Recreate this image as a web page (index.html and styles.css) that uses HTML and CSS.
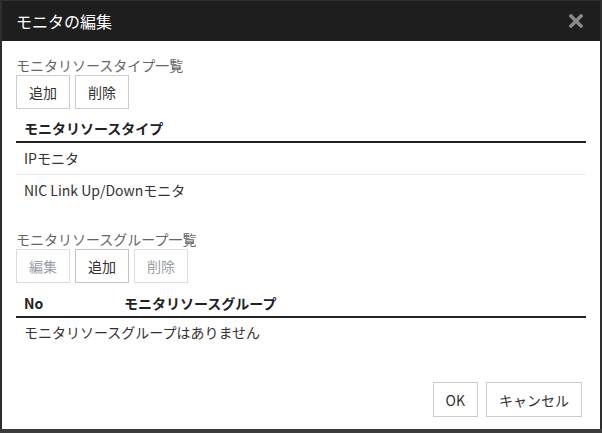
FILE: index.html
```html
<!DOCTYPE html>
<html lang="ja">
<head>
<meta charset="utf-8">
<title>モニタの編集</title>
<link rel="stylesheet" href="styles.css">
</head>
<body>
<div class="dialog">
  <div class="dialog-header">
    <span class="dialog-title">モニタの編集</span>
    <svg class="close" width="14" height="14" viewBox="0 0 14 14"><path d="M2 2L12 12M12 2L2 12" stroke="#8a8a8a" stroke-width="3.4" stroke-linecap="square"/></svg>
  </div>
  <div class="dialog-body">
    <div class="section-label">モニタリソースタイプ一覧</div>
    <div class="btn-row">
      <button class="btn">追加</button>
      <button class="btn">削除</button>
    </div>
    <table class="grid">
      <thead><tr><th>モニタリソースタイプ</th></tr></thead>
      <tbody>
        <tr><td>IPモニタ</td></tr>
        <tr class="last"><td>NIC Link Up/Downモニタ</td></tr>
      </tbody>
    </table>

    <div class="section-label section-gap">モニタリソースグループ一覧</div>
    <div class="btn-row">
      <button class="btn disabled">編集</button>
      <button class="btn active">追加</button>
      <button class="btn disabled">削除</button>
    </div>
    <table class="grid grid-group">
      <thead><tr><th class="col-no">No</th><th>モニタリソースグループ</th></tr></thead>
      <tbody>
        <tr class="empty"><td colspan="2">モニタリソースグループはありません</td></tr>
      </tbody>
    </table>
  </div>
  <div class="dialog-footer">
    <button class="btn btn-foot">OK</button>
    <button class="btn btn-foot">キャンセル</button>
  </div>
</div>
<div class="backdrop-strip"></div>
</body>
</html>
```
FILE: styles.css
```css
* { box-sizing: border-box; }
html, body {
  margin: 0;
  padding: 0;
  width: 602px;
  height: 433px;
  overflow: hidden;
  background: #2e2e2e;
  font-family: "Noto Sans CJK JP", "Noto Sans", sans-serif;
  font-size: 14px;
  color: #333;
}
.dialog {
  margin: 1px 2px 0 2px;
  width: 598px;
  height: 428px;
  background: #fff;
  display: flex;
  flex-direction: column;
}
.dialog-header {
  height: 40px;
  background: #1e1e1e;
  display: flex;
  align-items: center;
  justify-content: space-between;
  padding: 0 17px 0 14px;
}
.dialog-title {
  color: #fff;
  font-size: 16px;
  line-height: 20px;
}
.close { display: block; }
.dialog-body {
  padding: 14px 14px 0 14px;
}
.section-label {
  color: #666;
  line-height: 20px;
}
.section-gap { margin-top: 23px; }
.btn-row {
  display: flex;
  gap: 5px;
}
.btn {
  font-family: inherit;
  font-size: 14px;
  line-height: 20px;
  height: 34px;
  padding: 0 12px;
  background: #fff;
  border: 1px solid #ccc;
  color: #333;
  border-radius: 0;
}
.btn.disabled {
  color: #9aa0a6;
  border-color: #ddd;
}
.btn.active { border-color: #c4c4c4; }
.grid {
  width: 100%;
  border-collapse: collapse;
}
.grid th {
  text-align: left;
  font-weight: bold;
  color: #222;
  line-height: 20px;
  padding: 9px 8px 3px;
  border-bottom: 2px solid #222;
}
.grid-group th { padding-top: 10px; }
.grid th.col-no { width: 100px; }
.grid td {
  line-height: 20px;
  padding: 5px 8px 6px;
  border-bottom: 1px solid #ebebeb;
}
.grid tr.last td { border-bottom: none; }
.grid tr.empty td { padding: 4px 8px; border-bottom: none; }
.dialog-footer {
  margin-top: auto;
  display: flex;
  justify-content: flex-end;
  gap: 8px;
  padding: 0 18px 12px 0;
}
.btn-foot { height: 35px; }
.backdrop-strip {
  height: 4px;
  background: #3c3c3c;
}
```
